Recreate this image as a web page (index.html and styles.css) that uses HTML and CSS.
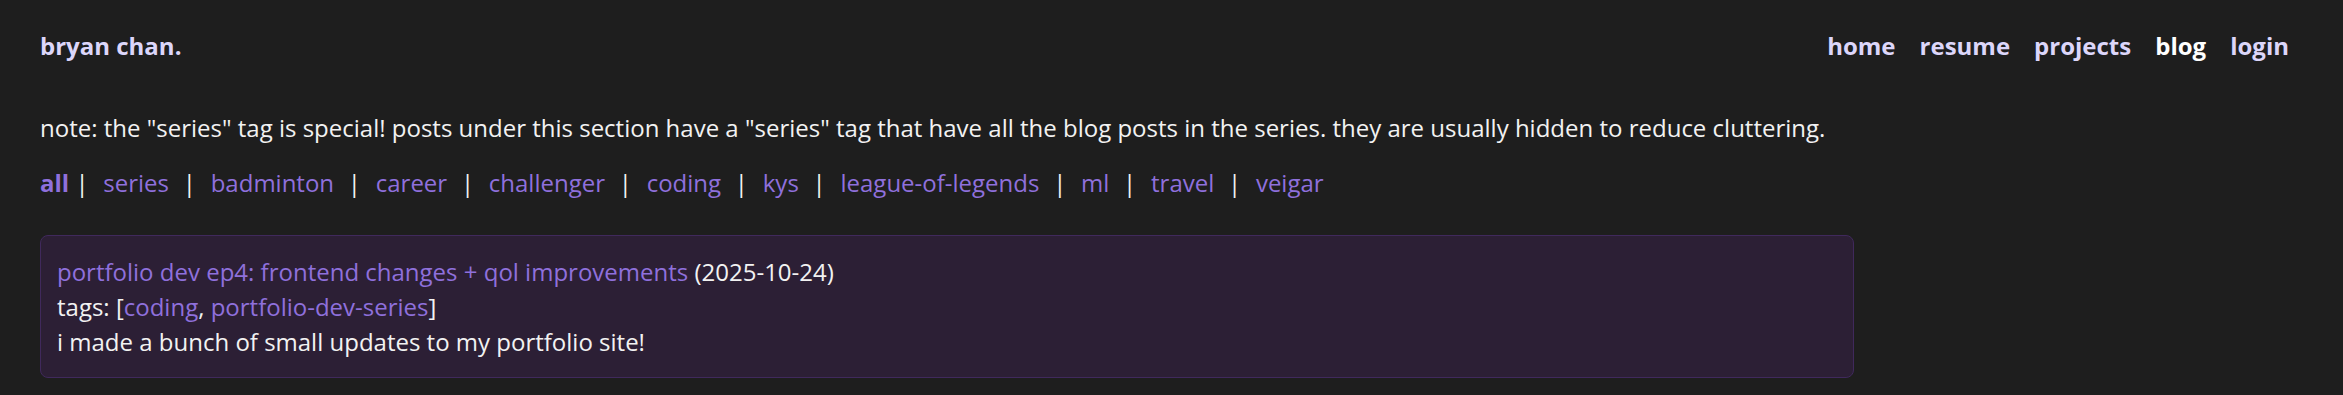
FILE: index.html
```html
<!DOCTYPE html>
<html lang="en">
<head>
    <meta charset="UTF-8">
    <meta name="viewport" content="width=device-width, initial-scale=1.0">
    <title>bryan chan. - blog</title>
    <link rel="stylesheet" href="styles.css">
</head>
<body>
    <header class="site-header">
        <a href="#" class="brand">bryan chan.</a>
        <nav class="nav-links">
            <a href="#">home</a>
            <a href="#">resume</a>
            <a href="#">projects</a>
            <a href="#" class="active">blog</a>
            <a href="#">login</a>
        </nav>
    </header>

    <main class="blog-page">
        <p class="note">note: the "series" tag is special! posts under this section have a "series" tag that have all the blog posts in the series. they are usually hidden to reduce cluttering.</p>

        <div class="tag-filter">
            <a href="#" class="selected">all</a> |
            <a href="#">series</a> |
            <a href="#">badminton</a> |
            <a href="#">career</a> |
            <a href="#">challenger</a> |
            <a href="#">coding</a> |
            <a href="#">kys</a> |
            <a href="#">league-of-legends</a> |
            <a href="#">ml</a> |
            <a href="#">travel</a> |
            <a href="#">veigar</a>
        </div>

        <div class="post-card">
            <div><a href="#">portfolio dev ep4: frontend changes + qol improvements</a> (2025-10-24)</div>
            <div>tags: [<a href="#">coding</a>, <a href="#">portfolio-dev-series</a>]</div>
            <div>i made a bunch of small updates to my portfolio site!</div>
        </div>
    </main>
</body>
</html>
```

FILE: styles.css
```css
body {
    font-family: 'Open Sans', sans-serif;
    margin: 0;
    padding: 0 40px;
    background: #1E1E1E;
    color: #F2F2F2;
    font-size: 24px;
}
a {
    text-decoration: none;
}
.site-header {
    display: flex;
    justify-content: space-between;
    align-items: center;
    height: 90px;
}
.brand {
    color: #DCD6FA;
    font-weight: 700;
    font-size: 24px;
}
.nav-links {
    display: flex;
    margin-right: 14px;
}
.nav-links a {
    color: #DCD6FA;
    font-weight: 700;
    font-size: 24px;
    margin-left: 24px;
}
.nav-links a.active {
    color: #FFFFFF;
}
.note {
    margin: 21px 0 0;
    line-height: 34px;
}
.tag-filter {
    margin-top: 21px;
    line-height: 34px;
}
.tag-filter a {
    color: #8F70DC;
    margin: 0 7.5px 0 8.5px;
}
.tag-filter a.selected {
    font-weight: 700;
    margin-left: 0;
    margin-right: 0;
}
.post-card {
    margin-top: 35px;
    width: 1814px;
    box-sizing: border-box;
    padding: 18px 16px;
    background: #2C1F35;
    border: 1px solid #40295C;
    border-radius: 8px;
    line-height: 35px;
}
.post-card a {
    color: #8F70DC;
}
```
